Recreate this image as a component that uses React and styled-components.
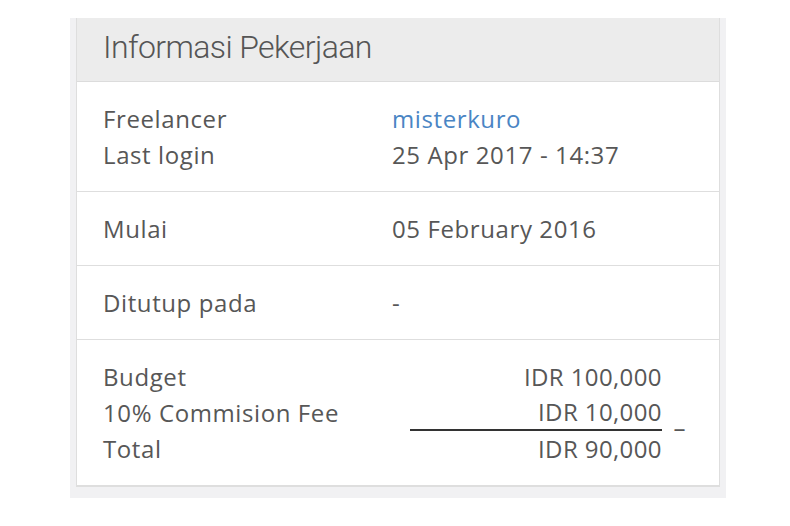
import React from 'react'
import styled, { createGlobalStyle } from 'styled-components'

const Global = createGlobalStyle`
    body {
        margin: 0;
        background: #fff;
        font-family: "Open Sans", "Liberation Sans", sans-serif;
        color: #555;
    }
`;

const Frame = styled.div`
    width: 644px;
    margin: 18px 0 0 70px;
    padding: 0 6px 11px;
    background-color: #f1f1f3;
`;

const Card = styled.div`
    background-color: #fff;
    border: 1px solid #dedede;
    border-top: none;
`;

const Header = styled.div`
    height: 64px;
    box-sizing: border-box;
    display: flex;
    align-items: center;
    padding: 0 0 5px 26px;
    background-color: #ececec;
    border-bottom: 1px solid #dcdcdc;
    font-family: "Roboto", "Liberation Sans", sans-serif;
    font-size: 32px;
    font-weight: 300;
    letter-spacing: -0.6px;
    color: #555;
`;

const Row = styled.div`
    display: grid;
    grid-template-columns: 289px 1fr;
    padding: 19px 26px 18px;
    border-bottom: 1px solid #dedede;
    font-size: 24px;
    line-height: 36px;
    letter-spacing: 0.6px;
`;

const Label = styled.div`
    color: #575757;
`;

const Value = styled.div`
    color: ${props => props.link ? '#4a85c4' : '#575757'};
`;

const Money = styled.div`
    padding: 19px 26px 18px;
    border-bottom: 1px solid #dedede;
`;

const MoneyRow = styled.div`
    display: grid;
    grid-template-columns: 289px 18px 252px 24px;
    align-items: end;
    font-size: 24px;
    line-height: 36px;
    letter-spacing: 0.6px;
    color: #575757;
`;

const Amount = styled.div`
    grid-column: 3;
    text-align: right;
    border-bottom: ${props => props.underline ? '2px solid #333' : 'none'};
    line-height: ${props => props.underline ? '34px' : '36px'};
    letter-spacing: 0.4px;
`;

const Minus = styled.div`
    grid-column: 4;
    justify-self: end;
    line-height: 14px;
    margin-bottom: -4px;
`;

export default function App() {
    return (
        <>
            <Global/>
            <Frame>
                <Card>
                    <Header>Informasi Pekerjaan</Header>

                    <Row>
                        <Label>Freelancer</Label>
                        <Value link>misterkuro</Value>
                        <Label>Last login</Label>
                        <Value>25 Apr 2017 - 14:37</Value>
                    </Row>

                    <Row>
                        <Label>Mulai</Label>
                        <Value>05 February 2016</Value>
                    </Row>

                    <Row>
                        <Label>Ditutup pada</Label>
                        <Value>-</Value>
                    </Row>

                    <Money>
                        <MoneyRow>
                            <Label>Budget</Label>
                            <Amount>IDR 100,000</Amount>
                        </MoneyRow>
                        <MoneyRow>
                            <Label>10% Commision Fee</Label>
                            <Amount underline>IDR 10,000</Amount>
                            <Minus>–</Minus>
                        </MoneyRow>
                        <MoneyRow>
                            <Label>Total</Label>
                            <Amount>IDR 90,000</Amount>
                        </MoneyRow>
                    </Money>
                </Card>
            </Frame>
        </>
    )
}
